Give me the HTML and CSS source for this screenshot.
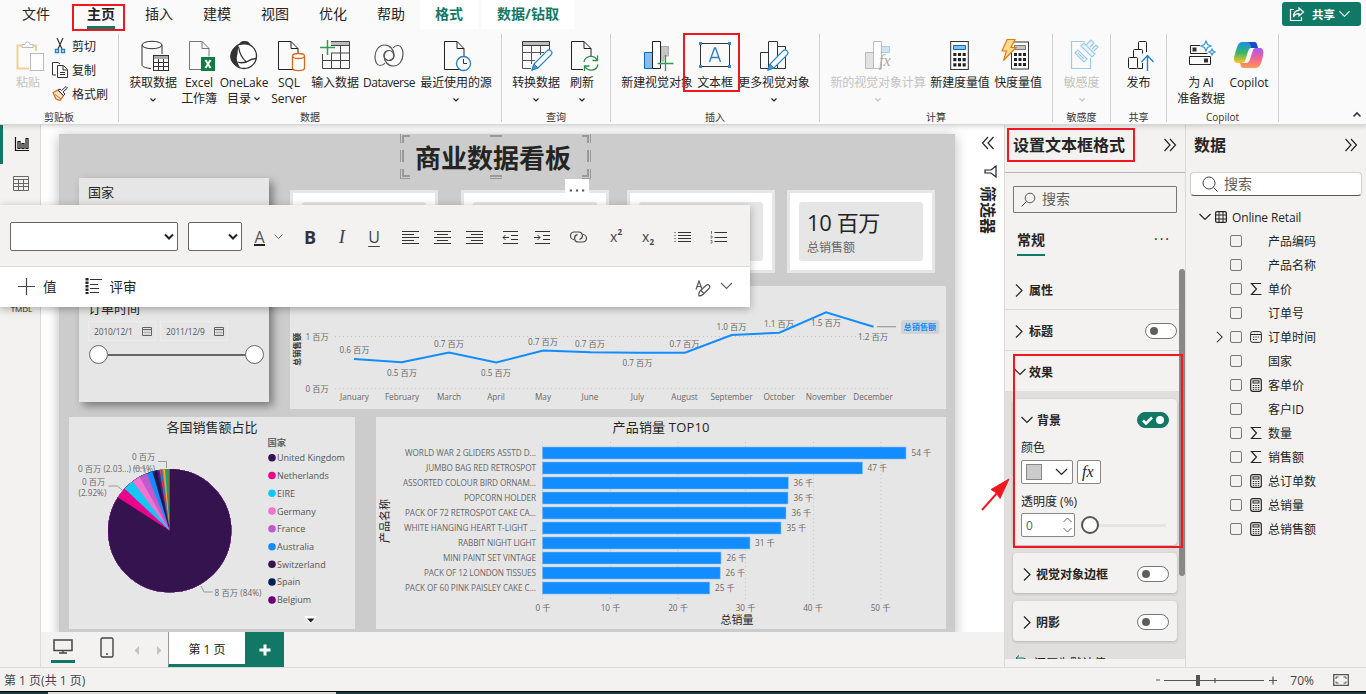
FILE: index.html
```html
<!DOCTYPE html>
<html lang="zh-CN">
<head>
    <meta charset="UTF-8">
    <meta name="viewport" content="width=device-width, initial-scale=1.0">
    <title>商业数据看板</title>
    <link rel="stylesheet" href="styles.css">
</head>
<body>
    <!-- Shared icons -->
    <svg class="sprite">
        <symbol id="chev-down" viewBox="0 0 12 8"><path d="M.5 1l5.500 5.500L11.500 1" fill="none" stroke="currentColor" stroke-width="1.200"/></symbol>
        <symbol id="chev-right" viewBox="0 0 8 13"><path d="M1 .5l6 6-6 6" fill="none" stroke="currentColor" stroke-width="1.200"/></symbol>
        <symbol id="drop" viewBox="0 0 8 6"><path d="M1.500 1.500L4 4l2.500-2.500" fill="none" stroke="currentColor" stroke-width="1.200"/></symbol>
        <symbol id="double-chev" viewBox="0 0 14 14"><path d="M1.500 1l5.500 6-5.500 6M7 1l5.500 6L7 13" fill="none" stroke="currentColor" stroke-width="1.200"/></symbol>
        <symbol id="page" viewBox="0 0 22 30"><path d="M20.500 29.500H1.500V1.500H14l7 7v8M14 1.500v7h7" fill="none" stroke="currentColor"/></symbol>
        <symbol id="pencil" viewBox="0 0 22 22"><path d="M1 21l2-6L16 1.800a2.800 2.800 0 0 1 4 4L7 19z" fill="#f4faff" stroke="#2a80c0" stroke-width="1.200"/><path d="M1 21l2-6 4 4z" fill="#4d9bd6" stroke="#2a80c0"/></symbol>
        <symbol id="sigma" viewBox="0 0 12 14"><path d="M11 1.500H1.500L6.500 7l-5 5.500H11.500" fill="none" stroke="currentColor" stroke-width="1.200"/></symbol>
        <symbol id="calc-small" viewBox="0 0 12 14">
            <rect x="0.700" y="0.700" width="10.600" height="12.600" rx="2" fill="none" stroke="currentColor" stroke-width="1.200"/>
            <rect x="3" y="2.800" width="6" height="2.200" fill="none" stroke="currentColor"/>
            <path d="M2.800 7.500h1.400M5.300 7.500h1.400M7.800 7.500h1.400M2.800 9.500h1.400M5.300 9.500h1.400M7.800 9.500h1.400M2.800 11.400h1.400M5.300 11.400h1.400M7.800 11.400h1.400" stroke="currentColor"/>
        </symbol>
        <symbol id="calendar" viewBox="0 0 12 12">
            <rect x="0.600" y="0.600" width="10.800" height="10.800" rx="2" fill="none" stroke="currentColor"/>
            <path d="M1 3.500h10" stroke="currentColor"/><path d="M3 6h1.300M5.400 6h1.300M7.800 6h1.300M3 8.500h1.300M5.400 8.500h1.300" stroke="currentColor" stroke-width="1.200"/>
        </symbol>
        <symbol id="date" viewBox="0 0 10 9"><path d="M.5.5h9v8h-9zM.5 2.500h9" fill="none" stroke="#555" stroke-width=".9"/><path d="M3 3v5M5 3v5M7 3v5M1 5.500h8" fill="none" stroke="#888" stroke-width=".4"/></symbol>
        <symbol id="calculator" viewBox="0 0 18 28">
            <rect x="0.500" y="0.500" width="17" height="27" fill="#fff" stroke="#333"/>
            <path d="M3 13h3M7.500 13h3M12 13h3M3 18h3M7.500 18h3M12 18h3M3 23h3M7.500 23h3M12 23h3" stroke="#222" stroke-width="3"/>
        </symbol>
    </svg>

    <header class="ribbon">
        <nav class="tabs">
            <span class="tab file">文件</span>
            <span class="tab active">主页</span>
            <span class="tab">插入</span>
            <span class="tab">建模</span>
            <span class="tab">视图</span>
            <span class="tab">优化</span>
            <span class="tab">帮助</span>
            <span class="tab context">格式</span>
            <span class="tab context wide">数据/钻取</span>
            <button class="share">
                <svg width="16" height="15" viewBox="0 0 16 15"><path d="M5 2.500H1.500v11h11V10M10 1l4.500 4L10 9V6.600C7 6.600 5.500 7.500 4.500 10 4.500 6 6.500 3.500 10 3.400z" fill="none" stroke="#fff" stroke-width="1.200"/></svg>
                共享
                <svg class="c-white" width="11" height="8"><use href="#chev-down"/></svg>
            </button>
        </nav>

        <div class="groups">
            <section class="group g-clip">
                <div class="tools">
                    <div class="tool w-paste off">
                        <svg class="ico" viewBox="0 0 32 32"><path d="M10 5.500H5.500v23H17M24 11V5.500h-5" fill="none" stroke="#f2cf9a" stroke-width="2"/><path d="M10 7.500v-3h3a2.500 2.500 0 0 1 5 0h3v3z" fill="#fff" stroke="#bbb"/><rect x="18.500" y="13.500" width="13" height="17" fill="#fff" stroke="#bbb"/></svg>
                        <span>粘贴</span>
                    </div>
                    <div class="small-tools">
                        <div class="small-tool"><svg width="16" height="16" viewBox="0 0 16 16"><path d="M5 0l5 11M11 0L6 11" stroke="#333" stroke-width="1.200"/><path d="M3.500 11.500h3v3h-3zM9.500 11.500h3v3h-3z" fill="#fff" stroke="#2a80c0" stroke-width="1.400"/></svg>剪切</div>
                        <div class="small-tool"><svg width="16" height="16" viewBox="0 0 16 16"><path d="M4 13H.5V.5H6L8 2M5.500 3.500h6l4 4v8h-10zM11 4v4h4M8 10.500h5M8 12.500h5" fill="none" stroke="#333"/></svg>复制</div>
                        <div class="small-tool"><svg width="16" height="16" viewBox="0 0 16 16"><path d="M1 6.500l5-2.500 5.500 5.500-3.500 5-4-1.500z" fill="#fbe3c8" stroke="#d2691e" stroke-width="1.200"/><path d="M3 8.500l6 4.500" stroke="#d2691e"/><path d="M6 4l5.500 5.500L13 8l-2-2 4.500-4L14 .5 9.500 4.500 8 3z" fill="#fff" stroke="#333"/></svg>格式刷</div>
                    </div>
                </div>
                <h2>剪贴板</h2>
            </section>

            <section class="group g-data">
                <div class="tools">
                    <div class="tool w46">
                        <svg class="ico" viewBox="0 0 32 32"><g fill="none" stroke="#333"><ellipse cx="15" cy="5" rx="10" ry="3.700"/><path d="M5 5v20c0 1.500 3 3 9 3.500M25 5v9"/></g><rect x="16.500" y="15.500" width="15" height="15" fill="#fff" stroke="#333"/><path d="M17 17.500h14" stroke="#aaa" stroke-width="3"/><path d="M21.500 19v12M26.500 19v12M17 22.500h14M17 26.500h14" stroke="#333"/></svg>
                        <span>获取数据</span><svg class="drop"><use href="#drop"/></svg>
                    </div>
                    <div class="tool w46">
                        <svg class="ico" viewBox="0 0 32 32"><g color="#777"><use href="#page" x="5" y="0" width="22" height="30"/></g><rect x="18" y="17" width="14" height="14" fill="#107c41"/><path d="M22.500 20l5 8M27.500 20l-5 8" stroke="#fff" stroke-width="2"/></svg>
                        <span>Excel<br>工作簿</span>
                    </div>
                    <div class="tool w44">
                        <svg class="ico" viewBox="0 0 32 32"><circle cx="16" cy="16" r="12.500" fill="#fff" stroke="#333" stroke-width="1.300"/><path d="M11 5c1-3.500 3-4 6-4s5 1.500 5.500 4.500C19 4 15 4 11 5z" fill="#333"/><path d="M11 5.500C5 7 1 13 2.500 19c1.500 5 6 7.500 9.500 8C9 23 8 18 9.500 14c.5-4 0-6 1.500-8.500z" fill="#333"/><path d="M10.500 7c1 6 3 11 8 15 4-3 7-3.500 10-3.500M18.500 22c-4 1-7 1-9 0" fill="none" stroke="#333" stroke-width="1.300"/></svg>
                        <span>OneLake<br>目录<svg class="drop inline"><use href="#drop"/></svg></span>
                    </div>
                    <div class="tool w46">
                        <svg class="ico" viewBox="0 0 32 32"><g color="#222"><use href="#page" x="4" y="0" width="22" height="30"/></g><path d="M19.500 16v12c0 3.500 12 3.500 12 0V16" fill="#fff" stroke="#d2691e" stroke-width="1.300"/><ellipse cx="25.500" cy="16" rx="6" ry="2.500" fill="#fff" stroke="#d2691e" stroke-width="1.300"/></svg>
                        <span>SQL<br>Server</span>
                    </div>
                    <div class="tool w46">
                        <svg class="ico" viewBox="0 0 32 32"><path d="M12 2h18v3H12z" fill="#bbb"/><path d="M12 1.500h18.500v27h-27V14M12 5.500h18M12 13h18M4 20.500h26M12.500 13v15M21.500 5v23" fill="none" stroke="#444"/><path d="M8.500 0v15M1 7.500h15" stroke="#2f9e4f" stroke-width="1.500"/></svg>
                        <span>输入数据</span>
                    </div>
                    <div class="tool w62">
                        <svg class="ico" viewBox="0 0 32 32"><g fill="none" stroke="#555" stroke-width="1.200"><path d="M16 10.500a5 5 0 1 0 5 5c0-6-4-10.500-9.500-10.500C5.500 5 2 11 2 17c0 4.500 2 8.500 5 8.500 2 0 4-1 5-2.500"/><path d="M16 20.500a5 5 0 1 0-5-5c0 6 4 10.500 9.500 10.500 6 0 9.500-6 9.500-12 0-4.500-2-8.500-5-8.500-2 0-4 1-5 2.500"/></g></svg>
                        <span class="tight">Dataverse</span>
                    </div>
                    <div class="tool w72">
                        <svg class="ico" viewBox="0 0 32 32"><g color="#222"><use href="#page" x="3" y="0" width="22" height="30"/></g><circle cx="23.500" cy="23.500" r="7" fill="#fff" stroke="#2a80c0" stroke-width="1.400"/><path d="M23.500 19v4.500H27" fill="none" stroke="#333"/></svg>
                        <span>最近使用的源</span><svg class="drop"><use href="#drop"/></svg>
                    </div>
                </div>
                <h2>数据</h2>
            </section>

            <section class="group g-query">
                <div class="tools">
                    <div class="tool w52">
                        <svg class="ico" viewBox="0 0 32 32"><path d="M2.500 1.500h27v4h-27z" fill="#bbb" stroke="#333"/><path d="M29.500 5v5M2.500 5v23.500H11M3 12.500h21M3 20.500h12M11.500 6v18M20.500 6v9" fill="none" stroke="#555"/><use href="#pencil" x="11" y="9" width="22" height="22"/></svg>
                        <span>转换数据</span><svg class="drop"><use href="#drop"/></svg>
                    </div>
                    <div class="tool w40">
                        <svg class="ico" viewBox="0 0 32 32"><g color="#222"><use href="#page" x="4" y="0" width="22" height="30"/></g><path d="M17 16h15v15H17z" fill="#fafafa"/><path d="M18 22a7 7 0 0 1 13-2M32 24.500a7 7 0 0 1-13 2M31.500 15.500V20.500H26.500M18.500 31v-5h5" fill="none" stroke="#2f8f4f" stroke-width="1.300"/></svg>
                        <span>刷新</span><svg class="drop"><use href="#drop"/></svg>
                    </div>
                </div>
                <h2>查询</h2>
            </section>

            <section class="group g-insert">
                <div class="tools">
                    <div class="tool w72">
                        <svg class="ico" viewBox="0 0 32 32"><path d="M3.500 12.500h8v16h-8z" fill="#83beec" stroke="#1068b8"/><path d="M20 6.500h7.500V16H23v5h-3z" fill="#c8c6c4" stroke="#aaa"/><path d="M11.500 1.500h8v27h-8z" fill="#fff" stroke="#222"/><path d="M24.500 15v16M16.500 23.500h16" stroke="#2f9e4f" stroke-width="1.300"/></svg>
                        <span>新建视觉对象</span>
                    </div>
                    <div class="tool w44">
                        <svg class="ico" viewBox="0 0 32 32"><path d="M1.500 3.500h29v23h-29z" fill="none" stroke="#333"/><path d="M0 2h3v3H0zM29 2h3v3h-3zM0 25h3v3H0zM29 25h3v3h-3z" fill="#2a8dd4"/><path d="M10.500 22l5-14h1l5 14M12.200 17.500h7.600" fill="none" stroke="#2a80c0" stroke-width="1.400"/></svg>
                        <span>文本框</span>
                    </div>
                    <div class="tool w74">
                        <svg class="ico" viewBox="0 0 32 32"><path d="M2.500 12.500h8v16h-8zM19.500 6.500h8v22h-8z" fill="none" stroke="#333"/><path d="M10.500 1.500h9v27h-9z" fill="#fff" stroke="#333"/><use href="#pencil" x="9" y="9" width="22" height="22"/></svg>
                        <span>更多视觉对象</span><svg class="drop"><use href="#drop"/></svg>
                    </div>
                </div>
                <h2>插入</h2>
            </section>

            <section class="group g-calc">
                <div class="tools">
                    <div class="tool w96 off">
                        <svg class="ico" viewBox="0 0 32 32"><path d="M3.500 12.500h8v16h-8z" fill="#e3e3e3" stroke="#bbb"/><path d="M19.500 6.500h8v6h-8z" fill="#cfe5f4" stroke="#a9cfe8"/><path d="M11.500 1.500h8v27h-8z" fill="#fff" stroke="#bbb"/><text x="17" y="26" class="fx-icon">fx</text></svg>
                        <span>新的视觉对象计算</span><svg class="drop"><use href="#drop"/></svg>
                    </div>
                    <div class="tool w68">
                        <svg class="ico" viewBox="0 0 32 32"><use href="#calculator" x="6" y="1" width="19" height="29"/><path d="M9.500 5.500h12v4h-12z" fill="#83beec" stroke="#1068b8"/></svg>
                        <span>新建度量值</span>
                    </div>
                    <div class="tool w48">
                        <svg class="ico" viewBox="0 0 32 32"><use href="#calculator" x="9" y="1" width="18" height="29"/><path d="M12.500 5.500h11v4h-11z" fill="#c8c6c4" stroke="#777"/><path d="M5-.5h8L9 7.500h5L1.500 20.500l3-9.500H0z" fill="#ffd98c" stroke="#e07b16" stroke-width="1.200"/></svg>
                        <span>快度量值</span>
                    </div>
                </div>
                <h2>计算</h2>
            </section>

            <section class="group g-sens">
                <div class="tools center">
                    <div class="tool w48 off">
                        <svg class="ico" viewBox="0 0 32 32"><g fill="none" stroke="#9ccbe8" stroke-width="1.200"><path d="M19 1.500H5.500v27h19V18"/><path d="M9 13l3-3 9 9-3 3zM12 13l6 6"/><path d="M15 6l3-3 11 11-3 3zM20 5l5-5 3 3-4 4M26 9l4-4 2 2-4 4" fill="#e8f3fa"/></g></svg>
                        <span>敏感度</span><svg class="drop"><use href="#drop"/></svg>
                    </div>
                </div>
                <h2>敏感度</h2>
            </section>

            <section class="group g-share">
                <div class="tools center">
                    <div class="tool w48">
                        <svg class="ico" viewBox="0 0 32 32"><g fill="none" stroke="#222"><rect x="5.500" y="17.500" width="9" height="11" rx="1"/><path d="M10.500 17V10.500a1 1 0 0 1 1-1h7a1 1 0 0 1 1 1v3M14.500 28.500h5V23M15.500 9V2.500a1 1 0 0 1 1-1h6a1 1 0 0 1 1 1V12"/></g><path d="M24.500 31V16M18.500 22l6-6.500 6 6.500" fill="none" stroke="#2a80c0" stroke-width="1.400"/></svg>
                        <span>发布</span>
                    </div>
                </div>
                <h2>共享</h2>
            </section>

            <section class="group g-copilot">
                <div class="tools">
                    <div class="tool w48">
                        <svg class="ico" viewBox="0 0 32 32"><path d="M15 5.500H5.500v8h17M4.500 16.500h21v8h-21z" fill="none" stroke="#222"/><path d="M7.500 7.500h4v4h-4zM19 18.500h4v4h-4z" fill="#333"/><path d="M21 1l1.500 3.500L26 6l-3.500 1.500L21 11l-1.500-3.500L16 6l3.500-1.500zM27 9l1 2 2 1-2 1-1 2-1-2-2-1 2-1z" fill="#fff" stroke="#3a96d6" stroke-width="1.200"/></svg>
                        <span>为 AI<br>准备数据</span>
                    </div>
                    <div class="tool w48">
                        <svg class="ico" viewBox="0 0 32 32">
                            <defs>
                                <linearGradient id="cp1" x1="0" y1="0" x2="0" y2="1"><stop offset="0" stop-color="#1a8cf0"/><stop offset=".5" stop-color="#35b56a"/><stop offset="1" stop-color="#ffc61a"/></linearGradient>
                                <linearGradient id="cp2" x1="0" y1="0" x2="0" y2="1"><stop offset="0" stop-color="#a55cf2"/><stop offset=".5" stop-color="#f0619a"/><stop offset="1" stop-color="#ff9a52"/></linearGradient>
                            </defs>
                            <path d="M9 2h12c3 0 3 3 4 6h-7c-2 0-3 3-4 7l-2 6c-1 2-2 2-4 2H5c-4 0-5-3-3-9C4 7 5 2 9 2z" fill="url(#cp1)"/>
                            <path d="M15 2h6c3 0 3 3 4 6h-7c0-3-1-5-3-6z" fill="#1c49c8"/>
                            <path d="M22 28H11c-3 0-3-2-4-5h6c3 0 4-3 5-7l2-6c1-2 2-2 4-2h3c3 0 4 3 3 8-2 8-3 12-8 12z" fill="url(#cp2)"/>
                        </svg>
                        <span>Copilot</span>
                    </div>
                </div>
                <h2>Copilot</h2>
            </section>
            <svg class="collapse" width="10" height="7" viewBox="0 0 10 7"><path d="M1.500 5.500L5 2l3.500 3.500" fill="none" stroke="#333" stroke-width="1.600"/></svg>
        </div>
    </header>

    <main class="workspace">
        <aside class="rail">
            <div class="rail-item active"><svg width="16" height="15" viewBox="0 0 16 15"><path d="M1.500 0v13.500H15M4 4.500h2v7H4zM8 6.500h2v5H8zM12 1.500h2v10h-2z" fill="none" stroke="#111" stroke-width="1.200"/></svg></div>
            <div class="rail-item"><svg width="16" height="15" viewBox="0 0 16 15"><path d="M.5.5h15v14H.5zM.5 3.500h15M.5 7.500h15M.5 10.500h15M5.500 3v11M10.500 3v11" fill="none" stroke="#666"/></svg></div>
            <div class="rail-label">TMDL</div>
        </aside>

        <div class="stage">
            <div class="canvas-area">
                <div class="report">
                    <div class="title-box">
                        <h1>商业数据看板</h1>
                        <svg class="handles" width="191" height="46" viewBox="0 0 191 46">
                            <path d="M.5 0v9M.5 16v12M.5 35v10M190.500 0v9M190.500 16v12M190.500 35v10" stroke="#999"/>
                            <path d="M3 9V2h7M90 2h12M182 2h6v7M3 16v12M188 16v12M3 35v7h7M90 42h12M182 42h6v-7" fill="none" stroke="#999" stroke-width="2"/>
                            <path d="M0 44.500h10M90 44.500h12M182 44.500h9" stroke="#999"/>
                        </svg>
                        <span class="more"><svg width="16" height="3" viewBox="0 0 16 3"><path d="M.8 1.500h2.200M6.900 1.500h2.200M13 1.500h2.200" stroke="#555" stroke-width="2.200"/></svg></span>
                    </div>

                    <section class="slicer">
                        <h3>国家</h3>
                        <h3>订单时间</h3>
                        <div class="dates">
                            <span>2010/12/1<svg width="10" height="9"><use href="#date"/></svg></span>
                            <span>2011/12/9<svg width="10" height="9"><use href="#date"/></svg></span>
                        </div>
                        <div class="range"><i></i><b></b><i></i></div>
                    </section>

                    <div class="cards">
                        <div class="card"><div class="card-body"></div></div>
                        <div class="card"><div class="card-body"></div></div>
                        <div class="card"><div class="card-body"></div></div>
                        <div class="card"><div class="card-body"><strong>10 百万</strong><span>总销售额</span></div></div>
                    </div>

                    <svg class="visual line-chart" viewBox="290 286 656 123">
                        <path d="M335 336.500h555M335 388.500h555" class="grid"/>
                        <text x="0" y="0" class="axis-title" transform="translate(300 366) rotate(-90)" textLength="33">总销售额</text>
                        <g class="lbl" text-anchor="middle">
                            <text x="317" y="339.500">1 百万</text><text x="317" y="391.500">0 百万</text>
                            <text x="354.500" y="352.500">0.6 百万</text><text x="402" y="375.500">0.5 百万</text><text x="449" y="346.500">0.7 百万</text>
                            <text x="496" y="375.500">0.5 百万</text><text x="543" y="344.500">0.7 百万</text><text x="590" y="346.500">0.7 百万</text>
                            <text x="637.500" y="365.500">0.7 百万</text><text x="684.500" y="346.500">0.7 百万</text><text x="731.500" y="329.500">1.0 百万</text>
                            <text x="779" y="326.500">1.1 百万</text><text x="826" y="325.500">1.5 百万</text><text x="873" y="339.500">1.2 百万</text>
                        </g>
                        <g class="lbl" text-anchor="middle">
                            <text x="354.500" y="399.500">January</text><text x="402" y="399.500">February</text><text x="449" y="399.500">March</text>
                            <text x="496" y="399.500">April</text><text x="543" y="399.500">May</text><text x="590" y="399.500">June</text>
                            <text x="637.500" y="399.500">July</text><text x="684.500" y="399.500">August</text><text x="731.500" y="399.500">September</text>
                            <text x="779" y="399.500">October</text><text x="826" y="399.500">November</text><text x="873" y="399.500">December</text>
                        </g>
                        <polyline points="354,359 401.700,362.300 449,352.500 496.300,362.500 543.300,350.500 590.300,352.300 637.700,352.700 685,352.700 731.700,335 779.300,332.700 826,312.400 873.500,326.700" class="series"/>
                        <path d="M877 326.700h19" stroke="#999" stroke-width="1.200"/>
                        <rect x="901" y="320" width="38.500" height="14" rx="2.500" fill="#d3d3d3"/>
                        <text x="903.500" y="330.300" class="series-name">总销售额</text>
                    </svg>

                    <svg class="visual pie-chart" viewBox="69 417 286 212">
                        <text x="212" y="432" class="chart-title" text-anchor="middle">各国销售额占比</text>
                        <g transform="rotate(-90 169.700 530.700)" fill="none" stroke-width="61.600">
                            <circle cx="169.700" cy="530.700" r="30.800" pathLength="360" stroke="#3f8f4f"/>
                            <circle cx="169.700" cy="530.700" r="30.800" pathLength="360" stroke="#7a7f55" stroke-dasharray="358.500 10"/>
                            <circle cx="169.700" cy="530.700" r="30.800" pathLength="360" stroke="#3f8f4f" stroke-dasharray="357.500 10"/>
                            <circle cx="169.700" cy="530.700" r="30.800" pathLength="360" stroke="#17a398" stroke-dasharray="356.500 10"/>
                            <circle cx="169.700" cy="530.700" r="30.800" pathLength="360" stroke="#e0c020" stroke-dasharray="355.500 10"/>
                            <circle cx="169.700" cy="530.700" r="30.800" pathLength="360" stroke="#e8743b" stroke-dasharray="354.300 10"/>
                            <circle cx="169.700" cy="530.700" r="30.800" pathLength="360" stroke="#2a6fc9" stroke-dasharray="353 10"/>
                            <circle cx="169.700" cy="530.700" r="30.800" pathLength="360" stroke="#d64550" stroke-dasharray="351.700 10"/>
                            <circle cx="169.700" cy="530.700" r="30.800" pathLength="360" stroke="#1f3a93" stroke-dasharray="350.500 10"/>
                            <circle cx="169.700" cy="530.700" r="30.800" pathLength="360" stroke="#6b007b" stroke-dasharray="349.200 10.800"/>
                            <circle cx="169.700" cy="530.700" r="30.800" pathLength="360" stroke="#012050" stroke-dasharray="347.700 12.300"/>
                            <circle cx="169.700" cy="530.700" r="30.800" pathLength="360" stroke="#3b1150" stroke-dasharray="345.800 14.200"/>
                            <circle cx="169.700" cy="530.700" r="30.800" pathLength="360" stroke="#118dff" stroke-dasharray="343.600 16.400"/>
                            <circle cx="169.700" cy="530.700" r="30.800" pathLength="360" stroke="#c05bcb" stroke-dasharray="338.200 21.800"/>
                            <circle cx="169.700" cy="530.700" r="30.800" pathLength="360" stroke="#f472d0" stroke-dasharray="330.800 29.200"/>
                            <circle cx="169.700" cy="530.700" r="30.800" pathLength="360" stroke="#15c6f4" stroke-dasharray="323.100 36.900"/>
                            <circle cx="169.700" cy="530.700" r="30.800" pathLength="360" stroke="#ec008c" stroke-dasharray="312.900 47.100"/>
                            <circle cx="169.700" cy="530.700" r="30.800" pathLength="360" stroke="#35134f" stroke-dasharray="302.700 57.300"/>
                        </g>
                        <path d="M158 461.500h8.500v6.500M108.500 486h9l4.500 4M201 586l3 6h8.500M134 468h11v5" fill="none" stroke="#999"/>
                        <g class="lbl">
                            <text x="132" y="459.500">0 百万</text>
                            <text x="78" y="471.500" textLength="53">0 百万 (2.03...)</text><text x="133" y="471.500" textLength="22">(0.1%)</text>
                            <text x="82" y="484.500">0 百万</text><text x="78.500" y="495.500">(2.92%)</text>
                            <text x="214.500" y="595.500" textLength="47">8 百万 (84%)</text>
                        </g>
                        <text x="267.500" y="446" class="legend-title">国家</text>
                        <circle cx="272" cy="457.700" r="3.800" fill="#35134f"/><circle cx="272" cy="475.500" r="3.800" fill="#ec008c"/>
                        <circle cx="272" cy="493.300" r="3.800" fill="#15c6f4"/><circle cx="272" cy="511" r="3.800" fill="#f472d0"/>
                        <circle cx="272" cy="528.800" r="3.800" fill="#c05bcb"/><circle cx="272" cy="546.700" r="3.800" fill="#118dff"/>
                        <circle cx="272" cy="564.300" r="3.800" fill="#3b1150"/><circle cx="272" cy="582" r="3.800" fill="#012050"/>
                        <circle cx="272" cy="600" r="3.800" fill="#6b007b"/>
                        <g class="legend">
                            <text x="277" y="461">United Kingdom</text><text x="277" y="479">Netherlands</text><text x="277" y="497">EIRE</text>
                            <text x="277" y="514.500">Germany</text><text x="277" y="532">France</text><text x="277" y="550">Australia</text>
                            <text x="277" y="568">Switzerland</text><text x="277" y="585">Spain</text><text x="277" y="603">Belgium</text>
                        </g>
                        <path d="M304 616h13l-6.500 8z" fill="#fff"/><path d="M307 618.500h7.500l-3.700 4z" fill="#222"/>
                    </svg>

                    <svg class="visual bar-chart" viewBox="376 417 570 212">
                        <text x="661" y="432" class="chart-title" text-anchor="middle" textLength="97">产品销量 TOP10</text>
                        <path d="M542.500 442v159M610.500 442v159M678 442v159M745.500 442v159M813.500 442v159M881 442v159" class="grid"/>
                        <text x="0" y="0" class="axis-name" transform="translate(389 543) rotate(-90)">产品名称</text>
                        <g fill="#118dff" stroke="#8cc0f5" stroke-width=".6">
                            <rect x="542.300" y="447" width="363.700" height="12"/><rect x="542.300" y="462" width="320.200" height="12"/>
                            <rect x="542.300" y="477" width="246" height="12"/><rect x="542.300" y="492" width="245.700" height="12"/>
                            <rect x="542.300" y="507" width="243.700" height="12"/><rect x="542.300" y="522" width="238.700" height="12"/>
                            <rect x="542.300" y="537" width="207.700" height="12"/><rect x="542.300" y="552" width="178.700" height="12"/>
                            <rect x="542.300" y="567" width="177.900" height="12"/><rect x="542.300" y="582" width="167.500" height="12"/>
                        </g>
                        <g class="lbl" text-anchor="end">
                            <text x="536" y="456" textLength="131">WORLD WAR 2 GLIDERS ASSTD D...</text>
                            <text x="536" y="471" textLength="110">JUMBO BAG RED RETROSPOT</text>
                            <text x="536" y="486" textLength="133">ASSORTED COLOUR BIRD ORNAM...</text>
                            <text x="536" y="501" textLength="72">POPCORN HOLDER</text>
                            <text x="536" y="516" textLength="131">PACK OF 72 RETROSPOT CAKE CA...</text>
                            <text x="536" y="531" textLength="132">WHITE HANGING HEART T-LIGHT ...</text>
                            <text x="536" y="546" textLength="78">RABBIT NIGHT LIGHT</text>
                            <text x="536" y="561" textLength="93">MINI PAINT SET VINTAGE</text>
                            <text x="536" y="576" textLength="112">PACK OF 12 LONDON TISSUES</text>
                            <text x="536" y="591" textLength="131">PACK OF 60 PINK PAISLEY CAKE C...</text>
                        </g>
                        <g class="lbl">
                            <text x="911.500" y="456">54 千</text><text x="867.500" y="471">47 千</text><text x="793.500" y="486">36 千</text>
                            <text x="793.500" y="501">36 千</text><text x="791.500" y="516">36 千</text><text x="786.500" y="531">35 千</text>
                            <text x="755" y="546">31 千</text><text x="726.500" y="561">26 千</text><text x="725.500" y="576">26 千</text><text x="715" y="591">25 千</text>
                        </g>
                        <g class="lbl" text-anchor="middle">
                            <text x="543" y="611">0 千</text><text x="610.500" y="611">10 千</text><text x="678" y="611">20 千</text>
                            <text x="745.500" y="611">30 千</text><text x="813" y="611">40 千</text><text x="880.500" y="611">50 千</text>
                        </g>
                        <text x="737" y="624" class="axis-name" text-anchor="middle">总销量</text>
                    </svg>
                </div>

                <aside class="filters">
                    <svg class="flip" width="14" height="14"><use href="#double-chev"/></svg>
                    <svg class="funnel" width="13" height="13" viewBox="0 0 13 13"><path d="M12 1v11L7 8H1V5h6z" fill="none" stroke="#222" stroke-width="1.200"/></svg>
                    <span>筛选器</span>
                </aside>
            </div>

            <footer class="pages">
                <span class="view-icon current"><svg width="20" height="15" viewBox="0 0 20 15"><path d="M1 1h18v10.500H1z" fill="none" stroke="#444" stroke-width="1.500"/><path d="M10 11v3M6 14h8" stroke="#444" stroke-width="1.300"/></svg></span>
                <span class="view-icon phone"><svg width="14" height="21" viewBox="0 0 14 21"><rect x="1" y="1" width="12" height="19" rx="1.500" fill="none" stroke="#444" stroke-width="1.400"/><path d="M6 17h2" stroke="#444" stroke-width="1.500"/></svg></span>
                <svg class="nav-arrows" width="28" height="9" viewBox="0 0 28 9"><path d="M5 0v9L.5 4.500zM23 0v9l4.500-4.500z" fill="#c4c4c4"/></svg>
                <span class="page-tab">第 1 页</span>
                <span class="add-page"><svg width="12" height="12" viewBox="0 0 12 12"><path d="M6 .5v11M.5 6h11" stroke="#fff" stroke-width="3"/></svg></span>
            </footer>
        </div>

        <aside class="format-pane">
            <div class="pane-head"><h2>设置文本框格式</h2><svg width="14" height="14"><use href="#double-chev"/></svg></div>
            <div class="pane-scroll">
                <div class="search"><svg width="15" height="15" viewBox="0 0 15 15"><circle cx="9" cy="6" r="4.800" fill="none" stroke="#555"/><path d="M5.500 9.500L.5 14.500" stroke="#555"/></svg>搜索</div>
                <div class="pane-tabs"><b>常规</b><span>···</span></div>
                <div class="row"><svg class="cr"><use href="#chev-right"/></svg>属性</div>
                <div class="row"><svg class="cr"><use href="#chev-right"/></svg>标题<i class="toggle"></i></div>
                <div class="row open"><svg class="cd"><use href="#chev-down"/></svg>效果</div>
                <div class="effects">
                    <div class="panel background">
                        <div class="panel-head"><svg class="cd"><use href="#chev-down"/></svg>背景<i class="toggle on"><svg width="11" height="9" viewBox="0 0 11 9"><path d="M1 4.500l3 3 6-6" fill="none" stroke="#fff" stroke-width="2.500"/></svg></i></div>
                        <label>颜色</label>
                        <div class="field-row">
                            <span class="color-pick"><i></i><svg width="13" height="8"><use href="#chev-down"/></svg></span>
                            <span class="fx">fx</span>
                        </div>
                        <label>透明度 (%)</label>
                        <div class="field-row opacity">
                            <span class="number">0<svg width="9" height="16" viewBox="0 0 9 16"><path d="M.5 5l4-4 4 4M.5 11l4 4 4-4" fill="none" stroke="#666"/></svg></span>
                            <span class="slider"><i></i></span>
                        </div>
                    </div>
                    <div class="panel"><div class="panel-head"><svg class="cr"><use href="#chev-right"/></svg>视觉对象边框<i class="toggle"></i></div></div>
                    <div class="panel"><div class="panel-head"><svg class="cr"><use href="#chev-right"/></svg>阴影<i class="toggle"></i></div></div>
                    <div class="reset"><svg width="12" height="12" viewBox="0 0 12 12"><path d="M1 3h7a3 3 0 0 1 0 7H4M4 .5L1 3l3 2.500" fill="none" stroke="#117865"/></svg>还原为默认值</div>
                </div>
                <i class="scrollbar"></i>
            </div>
        </aside>

        <aside class="data-pane">
            <div class="pane-head"><h2>数据</h2><svg width="14" height="14"><use href="#double-chev"/></svg></div>
            <div class="search"><svg width="16" height="16" viewBox="0 0 16 16"><circle cx="7" cy="7" r="6" fill="none" stroke="#444"/><path d="M11.500 11.500l4 4" stroke="#444"/></svg>搜索</div>
            <div class="table-name">
                <svg width="12" height="8"><use href="#chev-down"/></svg>
                <svg width="12" height="12" viewBox="0 0 12 12"><rect x=".6" y=".6" width="10.800" height="10.800" rx="1.500" fill="none" stroke="#222" stroke-width="1.200"/><path d="M1 4h10M1 8h10M4 1v10M8 1v10" stroke="#222"/></svg>
                Online Retail
            </div>
            <ul class="fields">
                <li><s></s><i></i><em></em>产品编码</li>
                <li><s></s><i></i><em></em>产品名称</li>
                <li><s></s><i></i><em><svg width="12" height="14"><use href="#sigma"/></svg></em>单价</li>
                <li><s></s><i></i><em></em>订单号</li>
                <li><s><svg width="7" height="12"><use href="#chev-right"/></svg></s><i></i><em><svg width="12" height="12"><use href="#calendar"/></svg></em>订单时间</li>
                <li><s></s><i></i><em></em>国家</li>
                <li><s></s><i></i><em><svg width="12" height="14"><use href="#calc-small"/></svg></em>客单价</li>
                <li><s></s><i></i><em></em>客户ID</li>
                <li><s></s><i></i><em><svg width="12" height="14"><use href="#sigma"/></svg></em>数量</li>
                <li><s></s><i></i><em><svg width="12" height="14"><use href="#sigma"/></svg></em>销售额</li>
                <li><s></s><i></i><em><svg width="12" height="14"><use href="#calc-small"/></svg></em>总订单数</li>
                <li><s></s><i></i><em><svg width="12" height="14"><use href="#calc-small"/></svg></em>总销量</li>
                <li><s></s><i></i><em><svg width="12" height="14"><use href="#calc-small"/></svg></em>总销售额</li>
            </ul>
        </aside>
    </main>

    <footer class="status">
        <span>第 1 页(共 1 页)</span>
        <div class="zoom">
            <svg width="124" height="14" viewBox="0 0 124 14"><path d="M1 7h4M9 7.500h100M60 5v5M114 7.500h8M118 3.500v8" stroke="#555" stroke-width="1.200"/><path d="M43 2v11" stroke="#555" stroke-width="4"/></svg>
            <span>70%</span>
            <svg width="16" height="12" viewBox="0 0 16 12"><path d="M.7.7h14.600v10.600H.7z" fill="none" stroke="#555" stroke-width="1.300"/><path d="M3 5V3h2.500M10.500 3H13v2M13 7.500V9h-2.500M5.500 9H3V7.500" fill="none" stroke="#555"/></svg>
        </div>
    </footer>
    <div class="taskbar"><i></i></div>

    <!-- Floating text toolbar -->
    <div class="text-toolbar">
        <div class="bar-format">
            <span class="select font"><svg width="10" height="7" viewBox="0 0 10 7"><path d="M1 1.500l4 4 4-4" fill="none" stroke="#222" stroke-width="2"/></svg></span>
            <span class="select size"><svg width="10" height="7" viewBox="0 0 10 7"><path d="M1 1.500l4 4 4-4" fill="none" stroke="#222" stroke-width="2"/></svg></span>
            <span class="font-color">A</span>
            <svg class="thin-drop" width="9" height="6" viewBox="0 0 9 6"><path d="M.5.500l4 4 4-4" fill="none" stroke="#666"/></svg>
            <span class="btn bold">B</span>
            <span class="btn italic">I</span>
            <span class="btn underline">U</span>
            <span class="btn sp4"><svg width="17" height="14" viewBox="0 0 17 14"><path d="M0 1.500h17M0 4.500h12M0 7.500h17M0 10.500h12M0 13.500h17" stroke="#333"/></svg></span>
            <span class="btn"><svg width="17" height="14" viewBox="0 0 17 14"><path d="M0 1.500h17M3 4.500h11M0 7.500h17M3 10.500h11M0 13.500h17" stroke="#333"/></svg></span>
            <span class="btn"><svg width="17" height="14" viewBox="0 0 17 14"><path d="M0 1.500h17M5 4.500h12M0 7.500h17M5 10.500h12M0 13.500h17" stroke="#333"/></svg></span>
            <span class="btn sp4"><svg width="16" height="14" viewBox="0 0 16 14"><path d="M1 1.500h15M9 5.500h7M9 9.500h7M1 13.500h15M1 7.500h6M3.500 5L1 7.500 3.500 10" fill="none" stroke="#333"/></svg></span>
            <span class="btn"><svg width="16" height="14" viewBox="0 0 16 14"><path d="M1 1.500h15M9 5.500h7M9 9.500h7M1 13.500h15M0 7.500h6M3.500 5L6 7.500 3.500 10" fill="none" stroke="#333"/></svg></span>
            <span class="btn sp4"><svg width="17" height="12" viewBox="0 0 17 12"><path d="M4 8.500a3.700 3.700 0 0 1 .5-7.500h4a3.700 3.700 0 0 1 1 7.300M13 3.500a3.700 3.700 0 0 1-.5 7.500h-4a3.700 3.700 0 0 1-1-7.300" fill="none" stroke="#444" stroke-width="1.200"/></svg></span>
            <span class="btn sp6 script">x<sup>2</sup></span>
            <span class="btn script">x<sub>2</sub></span>
            <span class="btn sp2"><svg width="17" height="14" viewBox="0 0 17 14"><path d="M4 2.500h13M4 5.500h13M4 8.500h13M4 11.500h13" stroke="#333"/><path d="M.5 2.500h1M.5 5.500h1M.5 8.500h1M.5 11.500h1" stroke="#333"/></svg></span>
            <span class="btn sp4"><svg width="17" height="14" viewBox="0 0 17 14"><path d="M4.500 2.500H17M4.500 7.500H17M4.500 11.500H17" stroke="#333"/><path d="M1.500 1v3M.5 6h1.500v2H.5M.5 10.500h1.500v2.500H.5" fill="none" stroke="#555" stroke-width=".8"/></svg></span>
        </div>
        <div class="bar-value">
            <svg width="17" height="17" viewBox="0 0 17 17"><path d="M8.500 0v17M0 8.500h17" stroke="#444" stroke-width="1.200"/></svg>
            <span class="value">值</span>
            <svg width="17" height="16" viewBox="0 0 17 16"><path d="M5 1.500h12M5 6.500h8M5 10.500h9M5 14.500h9" stroke="#333"/><path d="M2 0v16" stroke="#222" stroke-width="3" stroke-dasharray="2.500 1"/></svg>
            <span class="review">评审</span>
            <svg class="style-pen" width="16" height="17" viewBox="0 0 16 17"><path d="M1 9.500L4 1l3 8M2 6.500h4M4 16c-.5-2 0-4 1.500-5.500l5.500-5c2.500-2 5 .5 3 3L8.500 14c-1.200 1.200-2.500 2-4.500 2zM6 10.500l2.500 2.500" fill="none" stroke="#555" stroke-width="1.200"/></svg>
            <svg class="c-gray" width="13" height="8"><use href="#chev-down"/></svg>
        </div>
    </div>

    <!-- Callouts -->
    <i class="callout call-home"></i>
    <i class="callout call-textbox"></i>
    <i class="callout call-pane"></i>
    <i class="callout call-effects"></i>
    <svg class="arrow" width="30" height="34" viewBox="0 0 30 34"><path d="M1 33L17 15" stroke="#f01820" stroke-width="2"/><path d="M28 2L10 12.500l5 3 4 6z" fill="#f01820" stroke="#f01820"/></svg>
</body>
</html>
```

FILE: styles.css
```css
* {
    box-sizing: border-box;
}

body {
    margin: 0;
    width: 1366px;
    height: 694px;
    overflow: hidden;
    display: flex;
    flex-direction: column;
    position: relative;
    background: #f3f2f1;
    color: #252423;
    font-family: "Open Sans", "Noto Sans CJK SC", sans-serif;
    font-size: 12px;
}

h1, h2, h3, ul {
    margin: 0;
    padding: 0;
}

svg {
    display: block;
    flex: none;
}

.sprite {
    position: absolute;
    width: 0;
    height: 0;
}

/* Ribbon */
.ribbon {
    height: 125px;
    flex: none;
    background: #fafafa;
    border-bottom: 1px solid #d6d6d6;
    position: relative;
    z-index: 2;
    box-shadow: 0 1px 5px rgba(0, 0, 0, 0.18);
}

.tabs {
    display: flex;
    height: 29px;
    padding-left: 7px;
    font-size: 14px;
    line-height: 28px;
}

.tab {
    width: 58px;
    text-align: center;
}

.tab.file {
    margin-right: 7px;
}

.tab.active {
    font-weight: bold;
    background: linear-gradient(#117865, #117865) center bottom / 28px 3px no-repeat;
}

.tab.context {
    background: #fff;
    color: #117865;
    font-weight: bold;
}

.tab.wide {
    width: 92px;
    margin-left: 4px;
}

.share {
    margin: 2px 5px 0 auto;
    width: 79px;
    height: 24px;
    display: flex;
    align-items: center;
    gap: 7px;
    padding: 0 7px 0 7px;
    border: 0;
    border-radius: 3px;
    background: #117865;
    color: #fff;
    font: bold 11.5px "Noto Sans CJK SC", sans-serif;
    white-space: nowrap;
}

.share svg:last-child {
    margin-left: -3px;
}

.groups {
    display: flex;
    height: 95px;
    padding-top: 5px;
}

.group {
    height: 88px;
    border-right: 1px solid #d0d0d0;
    display: flex;
    flex-direction: column;
    justify-content: space-between;
}

.group h2 {
    font-size: 10px;
    font-weight: normal;
    line-height: 14px;
    text-align: center;
    margin-bottom: -2px;
    color: #333;
}

.g-clip { width: 119px; }
.g-data { width: 383px; }
.g-query { width: 109px; }
.g-insert { width: 209px; }
.g-calc { width: 233px; }
.g-sens { width: 58px; }
.g-share { width: 56px; }
.g-copilot { width: 112px; }

.tools {
    display: flex;
    padding: 6px 0 0 10px;
}

.g-data .tools { padding-left: 11px; }
.g-query .tools { padding-left: 8px; }
.g-clip .tools { padding-left: 8px; }

.tools.center {
    justify-content: center;
    padding-left: 0;
}

.tool {
    display: flex;
    flex-direction: column;
    align-items: center;
    flex: none;
    white-space: nowrap;
    text-align: center;
    line-height: 16px;
}

.tool > span {
    margin: 3px -10px 0;
    letter-spacing: -0.1px;
}

.tool > .tight {
    letter-spacing: -0.5px;
}

.tool.off {
    color: #c3c3c3;
}

.ico {
    width: 32px;
    height: 32px;
    overflow: visible;
}

.drop {
    width: 8px;
    height: 6px;
    margin-top: 6px;
}

.drop.inline {
    display: inline-block;
    margin: 0 0 1px 2px;
}

.w40 { width: 40px; }
.w44 { width: 44px; }
.w46 { width: 46px; }
.w48 { width: 48px; }
.w52 { width: 52px; }
.w62 { width: 62px; }
.w68 { width: 68px; }
.w72 { width: 72px; }
.w74 { width: 74px; }
.w96 { width: 96px; }
.w-paste { width: 40px; }

.fx-icon {
    font: italic 16px "Liberation Serif", serif;
    fill: #aaa;
}

.small-tools {
    display: flex;
    flex-direction: column;
    gap: 8px;
    margin-top: -2px;
    padding-left: 4px;
}

.small-tool {
    display: flex;
    align-items: center;
    gap: 4px;
    height: 16px;
    white-space: nowrap;
}

.collapse {
    margin: 77px 4px 0 auto;
}

.c-white { color: #fff; }
.c-gray { color: #666; }

/* Workspace */
.workspace {
    flex: 1;
    display: flex;
    min-height: 0;
}

.rail {
    width: 41px;
    flex: none;
    border-right: 1px solid #dcdad8;
}

.rail-item {
    height: 39px;
    display: flex;
    align-items: center;
    justify-content: center;
}

.rail-item.active {
    border-left: 3px solid #117865;
    padding-left: 1px;
}

.rail-item + .rail-item {
    padding-left: 2px;
}

.rail-label {
    margin-top: 99px;
    padding-left: 3px;
    font-size: 8px;
    line-height: 14px;
    text-align: center;
}

.stage {
    width: 963px;
    flex: none;
    display: flex;
    flex-direction: column;
}

.canvas-area {
    height: 507px;
    flex: none;
    display: flex;
    background: #fff;
    overflow: hidden;
    padding: 9px 0 0 18px;
}

/* Report page */
.report {
    width: 896px;
    height: 504px;
    flex: none;
    display: grid;
    grid-template-columns: 10px 190px 21px 65px 21px 570px;
    grid-template-rows: 44px 12px 83px 13px 123px 8px 212px;
    padding-left: 10px;
    background: #ccc;
    box-shadow: 0 2px 12px rgba(0, 0, 0, 0.28);
}

.title-box {
    grid-area: 1 / 1 / 2 / 7;
    position: relative;
    width: 189px;
    height: 44px;
    margin-left: 332px;
    padding-left: 14px;
}

.title-box h1 {
    font-size: 26px;
    line-height: 48px;
    white-space: nowrap;
}

.handles {
    position: absolute;
    left: -1px;
    top: 0;
}

.more {
    position: absolute;
    z-index: 1;
    left: 164px;
    top: 45px;
    width: 24px;
    height: 22px;
    padding: 10px 0 0 4px;
    background: #fff;
}

.slicer {
    grid-area: 2 / 2 / 6 / 3;
    height: 224px;
    background: #e6e6e6;
    box-shadow: 4px 4px 8px rgba(0, 0, 0, 0.4);
    padding: 4px 0 0 9px;
}

.slicer h3 {
    font-size: 13px;
    font-weight: normal;
    line-height: 20px;
}

.slicer h3 + h3 {
    margin-top: 96px;
}

.dates {
    display: flex;
    gap: 4px;
    margin-top: 3px;
}

.dates span {
    width: 68px;
    height: 20px;
    border: 1px solid #ececec;
    padding: 0 3px 0 5px;
    display: flex;
    align-items: center;
    justify-content: space-between;
    font-size: 8.4px;
    letter-spacing: -0.1px;
    color: #555;
}

.range {
    display: flex;
    align-items: center;
    width: 175px;
    margin: 4px 0 0 1px;
}

.range i {
    width: 19px;
    height: 19px;
    border: 1.5px solid #666;
    border-radius: 50%;
    background: #fff;
}

.range b {
    flex: 1;
    height: 2px;
    background: #666;
}

.cards {
    grid-area: 3 / 4 / 4 / 7;
    display: grid;
    grid-template-columns: 148px 148px 148px 148px;
    column-gap: 18px;
}

.card:nth-child(2),
.card:nth-child(3) { margin: 0 -5px 0 5px; }
.card:nth-child(4) { margin: 0 1px 0 -1px; }

.card {
    padding: 9px;
    background: #fff;
    border: 3px solid #e6e6e6;
}

.card-body {
    height: 59px;
    border-radius: 3px;
    background: #e6e6e6;
    display: flex;
    flex-direction: column;
    padding: 5px 8px;
}

.card-body strong {
    font-size: 22px;
    font-weight: 400;
    line-height: 31px;
    letter-spacing: -0.4px;
}

.card-body span {
    color: #666;
    line-height: 19px;
}

.visual {
    background: #e6e6e6;
    width: 100%;
    height: 100%;
}

.line-chart { grid-area: 5 / 4 / 6 / 7; }
.pie-chart { grid-area: 7 / 1 / 8 / 5; }
.bar-chart { grid-area: 7 / 6 / 8 / 7; }

.grid {
    stroke: #c4c4c4;
    stroke-dasharray: 1 3;
}

.lbl {
    font-size: 8.2px;
    fill: #666;
}

.axis-title {
    font-size: 8.2px;
    fill: #333;
    font-weight: bold;
}

.series {
    fill: none;
    stroke: #118dff;
    stroke-width: 2;
}

.series-name {
    font-size: 8.2px;
    font-weight: bold;
    fill: #118dff;
}

.chart-title {
    font-size: 13px;
    fill: #252423;
}

.axis-name {
    font-size: 11px;
    fill: #252423;
}

.legend-title {
    font-size: 9.3px;
    font-weight: bold;
    fill: #666;
}

.legend {
    font-size: 9px;
    fill: #555;
}

/* Collapsed filter pane */
.filters {
    margin-left: 23px;
    width: 24px;
    padding-top: 2px;
    font-weight: bold;
    font-size: 16px;
}

.flip { transform: scaleX(-1); margin-left: 3px; }
.funnel { margin: 15px 0 0 6px; }

.filters span {
    display: block;
    margin-top: 8px;
    writing-mode: vertical-rl;
    text-orientation: sideways;
    line-height: 20px;
}

.pages {
    height: 35px;
    display: flex;
    align-items: stretch;
}

.view-icon {
    width: 24px;
    margin-left: 10px;
    padding: 7px 0 0 2px;
}

.view-icon.current {
    background: linear-gradient(#117865, #117865) left 28px / 24px 3px no-repeat;
}

.view-icon.phone {
    margin-left: 23px;
    padding-top: 5px;
}

.nav-arrows {
    margin: 14px 0 0 12px;
}

.page-tab {
    margin-left: 6px;
    width: 77px;
    background: #fff;
    border-left: 1px solid #999;
    border-bottom: 3px solid #117865;
    text-align: center;
    line-height: 32px;
    padding-top: 2px;
    height: 35px;
    overflow: hidden;
    color: #222;
}

.add-page {
    width: 39px;
    background: #117865;
    display: flex;
    align-items: center;
    justify-content: center;
}

/* Format pane */
.format-pane {
    width: 182px;
    flex: none;
    border-left: 1px solid #dcdad8;
    border-right: 1px solid #dcdad8;
}

.pane-head {
    display: flex;
    align-items: center;
    justify-content: space-between;
    height: 48px;
    padding: 0 8px 8px;
}

.pane-head h2 {
    font-size: 16px;
    line-height: 24px;
    white-space: nowrap;
}

.format-pane .pane-head {
    border-bottom: 1px solid #b8b6b4;
    padding-bottom: 7px;
}

.pane-scroll {
    height: 486px;
    overflow: hidden;
    position: relative;
    padding-top: 13px;
}

.search {
    display: flex;
    align-items: center;
    font-size: 14px;
    line-height: 20px;
    color: #605e5c;
}

.format-pane .search {
    width: 164px;
    height: 27px;
    margin-left: 8px;
    padding: 0 0 1px 7px;
    gap: 6px;
    border: 1px solid #777;
    border-radius: 1px;
}

.pane-tabs {
    height: 56px;
    display: flex;
    justify-content: space-between;
    padding: 17px 16px 0 12px;
    font-size: 14px;
    line-height: 20px;
}

.pane-tabs b {
    height: 26px;
    border-bottom: 2px solid #117865;
}

.pane-tabs span {
    letter-spacing: 2px;
    margin-right: -2px;
    line-height: 18px;
}

.row {
    height: 41px;
    display: flex;
    align-items: center;
    padding: 2px 8px 0 10px;
    border-bottom: 1px solid #dcdad8;
    font-weight: bold;
}

.row.open {
    height: 40px;
    border-bottom: 0;
    padding-left: 9px;
}

.cr {
    width: 8px;
    height: 13px;
    margin-right: 6px;
}

.cd {
    width: 12px;
    height: 8px;
    margin-right: 3px;
}

.toggle {
    margin-left: auto;
    width: 32px;
    height: 16px;
    border: 1px solid #777;
    border-radius: 8px;
    background: #fff;
    display: flex;
    align-items: center;
    padding: 0 4px;
    justify-content: space-between;
}

.toggle::before {
    content: "";
    width: 8px;
    height: 8px;
    border-radius: 50%;
    background: #605e5c;
}

.toggle.on {
    background: #117865;
    border-color: #117865;
}

.toggle.on::before {
    order: 2;
    background: #fff;
}

.effects {
    background: #e1dfdd;
    height: 268px;
    padding: 8px 8px 0;
    display: flex;
    flex-direction: column;
    gap: 8px;
}

.panel {
    width: 164px;
    height: 40px;
    flex: none;
    border-radius: 4px;
    background: #f3f2f1;
    box-shadow: 0 1px 3px rgba(0, 0, 0, 0.2);
    padding: 0 8px;
}

.panel.background {
    height: 146px;
}

.panel-head {
    height: 40px;
    display: flex;
    align-items: center;
    font-weight: bold;
    padding-top: 2px;
    white-space: nowrap;
}

.panel .cr { margin: 0 5px 0 2px; }
.panel .cd { margin-right: 4px; }

.panel label {
    display: block;
    line-height: 18px;
}

.field-row {
    display: flex;
    align-items: center;
    gap: 4px;
    height: 24px;
    margin: 3px 0 9px;
}

.field-row.opacity {
    margin-top: 2px;
}

.color-pick, .fx, .number {
    height: 24px;
    border: 1px solid #8a8886;
    border-radius: 2px;
    background: #fff;
    display: flex;
    align-items: center;
    justify-content: space-between;
    padding: 0 4px;
}

.color-pick { width: 52px; }

.color-pick i {
    width: 16px;
    height: 16px;
    background: #ccc;
    border: 1px solid #888;
}

.fx {
    width: 24px;
    font: italic 16px "Liberation Serif", serif;
}

.number {
    width: 54px;
    color: #605e5c;
    padding-right: 2px;
}

.slider {
    width: 80px;
    height: 3px;
    margin-left: 7px;
    background: #e5e4e2;
    display: flex;
    align-items: center;
}

.slider i {
    width: 18px;
    height: 18px;
    border: 2px solid #555;
    border-radius: 50%;
    background: #fff;
    margin-left: -5px;
}

.reset {
    display: flex;
    gap: 7px;
    padding: 6px 0 0 2px;
    line-height: 18px;
    white-space: nowrap;
}

.scrollbar {
    position: absolute;
    right: 0;
    top: 96px;
    width: 6px;
    height: 307px;
    border-radius: 3px;
    background: #8a8886;
}

/* Data pane */
.data-pane {
    flex: 1;
    min-width: 0;
}

.data-pane .search {
    width: 172px;
    height: 24px;
    margin: -1px 0 0 4px;
    padding: 0 0 1px 11px;
    gap: 6px;
    background: #fff;
    border: 1px solid #d1d1d1;
    border-bottom-color: #555;
    border-radius: 4px;
}

.table-name {
    display: flex;
    align-items: center;
    gap: 5px;
    height: 24px;
    margin: 9px 0 0 13px;
    letter-spacing: -0.15px;
}

.table-name svg:first-child {
    margin-right: -1px;
}

.fields {
    list-style: none;
}

.fields li {
    display: flex;
    align-items: center;
    height: 24px;
    padding-left: 30px;
}

.fields s {
    width: 14px;
    text-decoration: none;
}

.fields i {
    width: 12px;
    height: 12px;
    border: 1px solid #777;
    border-radius: 2px;
}

.fields em {
    width: 26px;
    padding-left: 8px;
}

/* Status bar */
.status {
    height: 24px;
    flex: none;
    display: flex;
    align-items: center;
    justify-content: space-between;
    border-top: 1px solid #dcdad8;
    padding: 1px 17px 0 4px;
    color: #444;
}

.zoom {
    display: flex;
    align-items: center;
    gap: 11px;
}

.zoom span + svg {
    margin-left: 8px;
}

.taskbar {
    height: 3px;
    flex: none;
    border-top: 1px solid #000;
    background: #1f3a44;
}

.taskbar i {
    display: block;
    width: 288px;
    height: 2px;
    margin-left: 48px;
    background: #dcdcdc;
}

/* Floating text toolbar */
.text-toolbar {
    position: absolute;
    z-index: 3;
    left: 0;
    top: 205px;
    width: 750px;
    height: 102px;
    background: #fff;
    box-shadow: 0 2px 8px rgba(0, 0, 0, 0.3);
}

.bar-format {
    display: flex;
    align-items: center;
    height: 62px;
    padding: 2px 0 0 10px;
    background: #f3f2f1;
    border-bottom: 1px solid #dcdad8;
}

.select {
    height: 29px;
    margin-top: -1px;
    border: 1px solid #666;
    border-radius: 2px;
    background: #fff;
    display: flex;
    align-items: center;
    justify-content: flex-end;
    padding-right: 3px;
}

.font { width: 168px; }
.size { width: 54px; margin-left: 10px; }

.font-color {
    width: 11px;
    margin: 3px 0 0 12px;
    border-bottom: 2px solid #222;
    font-size: 16px;
    line-height: 14px;
    text-align: center;
    color: #555;
}

.thin-drop {
    margin: 0 11px 0 9px;
}

.btn {
    width: 32px;
    flex: none;
    display: flex;
    justify-content: center;
    font-size: 18px;
    line-height: 22px;
    color: #444;
}

.sp2 { margin-left: 2px; }
.sp4 { margin-left: 4px; }
.sp6 { margin-left: 6px; }

.bold { font-weight: bold; color: #333; }
.italic { font-family: "Liberation Serif", serif; font-style: italic; font-size: 19px; }
.underline { font-size: 16px; text-decoration: underline; text-underline-offset: 3px; text-decoration-thickness: 1px; }

.script {
    font-size: 14px;
    line-height: 20px;
}

.script sup, .script sub {
    font-size: 8px;
    font-weight: bold;
    line-height: 10px;
}

.script sub {
    align-self: flex-end;
}

.bar-value {
    display: flex;
    align-items: center;
    height: 40px;
    padding: 0 17px 2px 18px;
    font-size: 13.5px;
}

.value { margin: 0 28px 0 8px; }
.review { margin-left: 8px; }
.style-pen { margin: 4px 9px 0 auto; }

/* Red callouts */
.callout {
    position: absolute;
    z-index: 4;
    border: 2px solid #f01820;
}

.call-home { left: 72px; top: 4px; width: 53px; height: 27px; }
.call-textbox { left: 683px; top: 33px; width: 57px; height: 59px; }
.call-pane { left: 1007px; top: 128px; width: 128px; height: 34px; }
.call-effects { left: 1013px; top: 354px; width: 170px; height: 194px; }

.arrow {
    position: absolute;
    z-index: 4;
    left: 981px;
    top: 477px;
}
```
